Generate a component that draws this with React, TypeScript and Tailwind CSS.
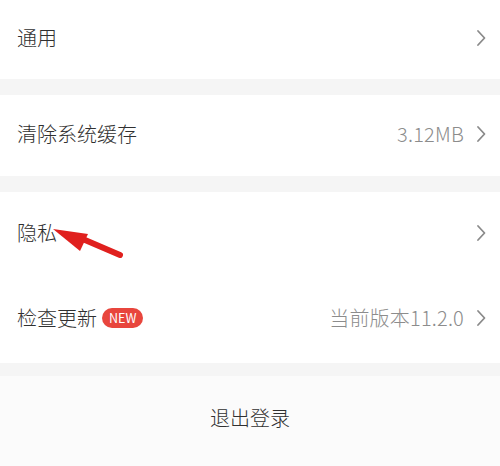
import { ReactNode } from 'react';

const font = { fontFamily: '"Noto Sans CJK SC", "Noto Sans", sans-serif' };

function Chevron() {
  return (
    <svg width="10" height="18" viewBox="0 0 10 18" className="ml-[12px] shrink-0">
      <path d="M2 2 L8.5 9 L2 16" fill="none" stroke="#8a8a8a" strokeWidth="1.8" strokeLinecap="round" strokeLinejoin="round" />
    </svg>
  );
}

function Row({ label, value, badge, h }: { label: string; value?: string; badge?: boolean; h: string }) {
  return (
    <div className={`flex items-center justify-between bg-white pb-[3px] pl-[17px] pr-[14px] ${h}`}>
      <div className="flex items-center">
        <span className="text-[20px] font-light text-[#303030]">{label}</span>
        {badge && (
          <span className="ml-[5px] rounded-full bg-[#e8463d] px-[7px] py-[1px] text-[12.5px] leading-[18px] text-white">
            NEW
          </span>
        )}
      </div>
      <div className="flex items-center">
        {value && <span className="text-[20px] font-light tracking-[0.2px] text-[#8c8c8c]">{value}</span>}
        <Chevron />
      </div>
    </div>
  );
}

function Band({ h }: { h: string }): ReactNode {
  return <div className={`bg-[#f5f5f5] ${h}`} />;
}

export default function App() {
  return (
    <div className="relative flex h-[466px] w-[500px] flex-col overflow-hidden bg-white" style={font}>
      <Row label="通用" h="h-[79px]" />
      <Band h="h-[16px]" />
      <Row label="清除系统缓存" value="3.12MB" h="h-[81px]" />
      <Band h="h-[16px]" />
      <Row label="隐私" h="h-[84px]" />
      <Row label="检查更新" value="当前版本11.2.0" badge h="h-[87px]" />
      <Band h="h-[13px]" />
      <div className="flex flex-1 items-center justify-center bg-[#fbfbfb] pb-[6px]">
        <span className="text-[20px] font-light text-[#303030]">退出登录</span>
      </div>

      {/* annotation arrow */}
      <svg className="absolute left-0 top-0" width="500" height="466" viewBox="0 0 500 466">
        <path d="M120 255 L85 240" stroke="#e0201e" strokeWidth="6" strokeLinecap="round" />
        <path d="M53 229 L88 234 L80 251 Z" fill="#e0201e" />
      </svg>
    </div>
  );
}
